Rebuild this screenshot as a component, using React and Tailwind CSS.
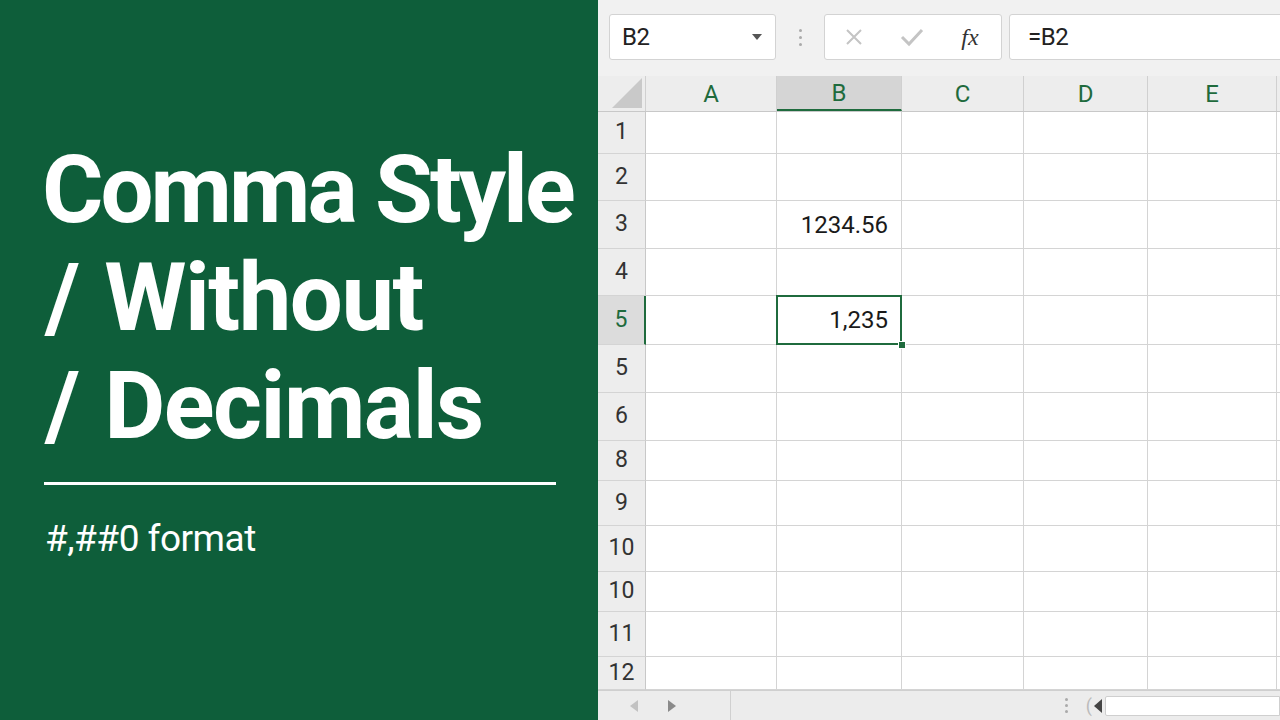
const cols = [
  { id: "A", w: "w-[131px]" },
  { id: "B", w: "w-[125px]" },
  { id: "C", w: "w-[122px]" },
  { id: "D", w: "w-[124px]" },
  { id: "E", w: "w-[129px]" },
];

const rows = [
  { label: "1", h: "h-[42px]" },
  { label: "2", h: "h-[47px]" },
  { label: "3", h: "h-[48px]", b: "1234.56" },
  { label: "4", h: "h-[47px]" },
  { label: "5", h: "h-[49px]", b: "1,235", sel: true },
  { label: "5", h: "h-[48px]" },
  { label: "6", h: "h-[48px]" },
  { label: "8", h: "h-[40px]" },
  { label: "9", h: "h-[45px]" },
  { label: "10", h: "h-[46px]" },
  { label: "10", h: "h-[40px]" },
  { label: "11", h: "h-[45px]" },
  { label: "12", h: "h-[33px]" },
];

function Toolbar() {
  return (
    <div className="h-[76px] shrink-0 bg-[#f1f1f1] flex items-start pt-[14px] pl-[11px]">
      <div className="w-[167px] h-[46px] shrink-0 bg-white border border-[#d3d3d3] rounded-[3px] flex items-center pl-[12px] pr-[12px] justify-between">
        <span className="text-[24px] text-[#222] tracking-[-0.5px]">B2</span>
        <svg width="12" height="8" viewBox="0 0 12 8">
          <path d="M1 1 L11 1 L6 7 Z" fill="#555" />
        </svg>
      </div>
      <div className="w-[48px] h-[46px] shrink-0 flex flex-col items-center justify-center gap-[4px]">
        <span className="w-[3px] h-[3px] rounded-full bg-[#aaa]" />
        <span className="w-[3px] h-[3px] rounded-full bg-[#aaa]" />
        <span className="w-[3px] h-[3px] rounded-full bg-[#aaa]" />
      </div>
      <div className="w-[178px] h-[46px] shrink-0 bg-white border border-[#d3d3d3] rounded-[3px] flex items-center">
        <div className="w-[58px] flex justify-center">
          <svg width="20" height="20" viewBox="0 0 20 20">
            <path d="M3 3 L17 17 M17 3 L3 17" stroke="#c4c4c4" strokeWidth="2" />
          </svg>
        </div>
        <div className="w-[58px] flex justify-center">
          <svg width="24" height="20" viewBox="0 0 24 20">
            <path d="M2 10 L9 17 L22 3" stroke="#c4c4c4" strokeWidth="3" fill="none" />
          </svg>
        </div>
        <div className="w-[58px] flex justify-center">
          <span className="font-['Liberation_Serif',serif] italic text-[24px] text-[#333]">fx</span>
        </div>
      </div>
      <div className="ml-[7px] w-[300px] h-[46px] shrink-0 bg-white border border-[#d3d3d3] rounded-l-[3px] flex items-center pl-[18px]">
        <span className="text-[24px] text-[#222] tracking-[-0.5px]">=B2</span>
      </div>
    </div>
  );
}

function HeaderRow() {
  return (
    <div className="h-[36px] shrink-0 flex bg-[#ededed] border-b border-[#c8c8c8]">
      <div className="w-[48px] shrink-0 border-r border-[#d0d0d0] flex items-end justify-end pb-[3px] pr-[3px]">
        <svg width="30" height="30" viewBox="0 0 30 30">
          <path d="M30 0 L30 30 L0 30 Z" fill="#c9c9c9" />
        </svg>
      </div>
      {cols.map((c) => (
        <div
          key={c.id}
          className={`${c.w} shrink-0 border-r border-[#d0d0d0] flex items-center justify-center text-[24px] text-[#1f6b3d] ${
            c.id === "B" ? "bg-[#d5d5d5] border-b-2 border-b-[#1f6b3d]" : ""
          }`}
        >
          {c.id}
        </div>
      ))}
      <div className="flex-1" />
    </div>
  );
}

function Grid() {
  return (
    <div className="flex-1 flex flex-col bg-white">
      {rows.map((r, i) => (
        <div key={i} className={`${r.h} shrink-0 flex`}>
          <div
            className={`w-[48px] shrink-0 flex items-center justify-center text-[23px] border-b border-[#d4d4d4] ${
              r.sel
                ? "bg-[#dcdcdc] text-[#1f6b3d] border-r-2 border-r-[#1f6b3d]"
                : "bg-[#ededed] text-[#333] border-r border-r-[#c8c8c8]"
            }`}
          >
            {r.label}
          </div>
          {cols.map((c) => (
            <div
              key={c.id}
              className={`${c.w} shrink-0 relative border-r border-b border-[#d4d4d4] flex items-center justify-end pr-[13px] text-[24px] text-[#1a1a1a] ${
                c.id === "B" && r.sel ? "z-10" : ""
              }`}
            >
              {c.id === "B" ? r.b : null}
              {c.id === "B" && r.sel ? (
                <>
                  <div className="absolute -left-px -top-px -right-px -bottom-px border-2 border-[#1f6b3d]" />
                  <div className="absolute -right-[5px] -bottom-[5px] w-[8px] h-[8px] bg-[#1f6b3d] border border-white" />
                </>
              ) : null}
            </div>
          ))}
          <div className="flex-1 border-b border-[#d4d4d4]" />
        </div>
      ))}
    </div>
  );
}

function BottomBar() {
  return (
    <div className="h-[30px] shrink-0 bg-[#ececec] border-t border-[#cfcfcf] flex items-center">
      <div className="w-[133px] h-full flex items-center border-r border-[#d0d0d0]">
        <svg className="ml-[32px]" width="8" height="12" viewBox="0 0 8 12">
          <path d="M8 0 L8 12 L0 6 Z" fill="#c2c2c2" />
        </svg>
        <svg className="ml-[30px]" width="8" height="12" viewBox="0 0 8 12">
          <path d="M0 0 L0 12 L8 6 Z" fill="#8a8a8a" />
        </svg>
      </div>
      <div className="flex-1" />
      <div className="flex flex-col gap-[3px] mr-[18px]">
        <span className="w-[3px] h-[3px] rounded-full bg-[#aaa]" />
        <span className="w-[3px] h-[3px] rounded-full bg-[#aaa]" />
        <span className="w-[3px] h-[3px] rounded-full bg-[#aaa]" />
      </div>
      <span className="text-[18px] text-[#bbb] leading-none mr-[2px]">(</span>
      <svg width="8" height="14" viewBox="0 0 8 14">
        <path d="M8 0 L8 14 L0 7 Z" fill="#444" />
      </svg>
      <div className="ml-[3px] w-[175px] h-[20px] shrink-0 bg-white border border-[#cfcfcf] rounded-l-[2px]" />
    </div>
  );
}

export default function App() {
  return (
    <div className="w-[1280px] h-[720px] flex overflow-hidden font-['Roboto','Noto_Sans',sans-serif]">
      <div className="w-[598px] shrink-0 bg-[#0e5e3a] flex flex-col pl-[42px] pt-[136px]">
        <h1 className="text-white font-bold text-[94px] leading-[108px] tracking-[-3px]">
          <div>Comma Style</div>
          <div className="pl-[3px] tracking-[-1.5px] [word-spacing:4px]">/ Without</div>
          <div className="pl-[3px] tracking-[-1.5px] [word-spacing:4px]">/ Decimals</div>
        </h1>
        <div className="mt-[22px] w-[512px] ml-[2px] h-[3px] bg-white" />
        <div className="mt-[26px] ml-[3px] text-white text-[37px] tracking-[-0.5px]">#,##0 format</div>
      </div>
      <div className="flex-1 flex flex-col overflow-hidden bg-[#f1f1f1]">
        <Toolbar />
        <HeaderRow />
        <Grid />
        <BottomBar />
      </div>
    </div>
  );
}
